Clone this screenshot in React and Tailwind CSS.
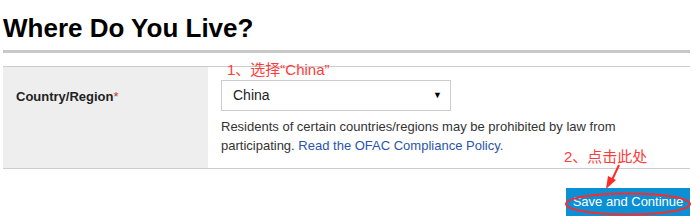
import React from 'react'

function Annotations() {
  return (
    <div className="pointer-events-none absolute inset-0">
      <span
        className="absolute left-[227px] top-[60px] text-[15px] leading-[20px] text-[#ff3b3b]"
        style={{ fontFamily: '"Liberation Sans", "Noto Sans CJK SC", sans-serif' }}
      >
        1、选择“China”
      </span>
      <span
        className="absolute left-[564px] top-[147px] text-[15px] leading-[20px] text-[#ff3b3b]"
        style={{ fontFamily: '"Liberation Sans", "Noto Sans CJK SC", sans-serif' }}
      >
        2、点击此处
      </span>
      <svg className="absolute left-0 top-0" width="700" height="224" viewBox="0 0 700 224">
        <line x1="619" y1="165" x2="612" y2="180" stroke="#ff2a2a" strokeWidth="2" />
        <polygon points="606,189 608,176 616,180" fill="#ff2a2a" />
        <ellipse cx="628" cy="204" rx="62" ry="10.5" fill="none" stroke="#ff2a2a" strokeWidth="2" />
      </svg>
    </div>
  )
}

export default function App() {
  return (
    <div
      className="relative h-[224px] w-[700px] overflow-hidden bg-white pl-[3px] pr-[10px]"
      style={{ fontFamily: '"Liberation Sans", Arial, sans-serif' }}
    >
      <h1 className="pt-[12px] text-[26px] font-bold leading-[32px] text-black">Where Do You Live?</h1>
      <div className="mt-[6px] h-[3px] bg-[#c8c8c8]" />

      <div className="mt-[13px] flex border-y border-[#cccccc]">
        <div className="w-[205px] bg-[#eeeeee] pl-[13px] pt-[20px] text-[13px] font-bold leading-[20px] text-[#222]">
          Country/Region<span className="font-normal text-[#c0392b]">*</span>
        </div>
        <div className="flex-1 pl-[13px] pt-[13px] pb-[13px]">
          <div className="flex h-[31px] w-[230px] items-center justify-between border border-[#cccccc] bg-white pl-[11px] pr-[8px] text-[14px] text-[#222]">
            <span>China</span>
            <span className="text-[9px] text-black">▼</span>
          </div>
          <p className="mt-[6px] pr-[10px] text-[13px] leading-[19px] text-[#333]">
            Residents of certain countries/regions may be prohibited by law from participating.{' '}
            <a className="text-[#2a55aa]">Read the OFAC Compliance Policy.</a>
          </p>
        </div>
      </div>

      <div className="mt-[19px] flex justify-end">
        <button className="h-[28px] w-[124px] bg-[#0b8fd5] text-[13px] leading-[28px] text-white">
          Save and Continue
        </button>
      </div>

      <Annotations />
    </div>
  )
}
